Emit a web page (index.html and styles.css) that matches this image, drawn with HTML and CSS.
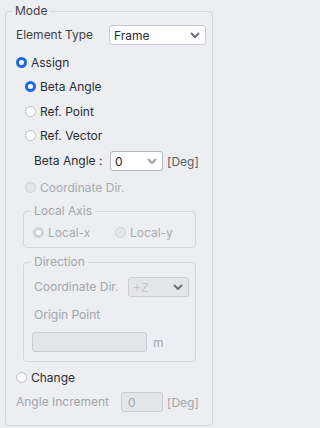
FILE: index.html
```html
<!DOCTYPE html>
<html>
<head>
<meta charset="utf-8">
<link rel="stylesheet" href="styles.css">
</head>
<body>
<div class="page">
  <fieldset class="group outer">
    <legend>Mode</legend>
    <div class="content">
      <div class="row elem-row">
        <span class="label">Element Type</span>
        <div class="select sel-elem"><span class="val">Frame</span><svg class="chev" viewBox="0 0 10 6"><path d="M1 1l4 4 4-4"/></svg></div>
      </div>
      <label class="row radio-row r-assign"><span class="radio checked"></span><span>Assign</span></label>
      <label class="row radio-row sub r-beta"><span class="radio checked"></span><span>Beta Angle</span></label>
      <label class="row radio-row sub r-gap5"><span class="radio"></span><span>Ref. Point</span></label>
      <label class="row radio-row sub r-gap4"><span class="radio"></span><span>Ref. Vector</span></label>
      <div class="row beta-row">
        <span class="label beta-label">Beta Angle :</span>
        <div class="select sel-beta"><span class="val">0</span><svg class="chev light" viewBox="0 0 10 6"><path d="M1 1l4 4 4-4"/></svg></div>
        <span class="unit">[Deg]</span>
      </div>
      <label class="row radio-row sub r-gap6 disabled"><span class="radio dis"></span><span>Coordinate Dir.</span></label>

      <fieldset class="group inner local">
        <legend>Local Axis</legend>
        <div class="inner-content local-content">
          <div class="row local-row">
            <label class="local-opt opt-x disabled"><span class="radio dis-checked"></span><span>Local-x</span></label>
            <label class="local-opt disabled"><span class="radio dis"></span><span>Local-y</span></label>
          </div>
        </div>
      </fieldset>

      <fieldset class="group inner direction">
        <legend>Direction</legend>
        <div class="inner-content dir-content">
          <div class="row dir-row">
            <span class="label muted">Coordinate Dir.</span>
            <div class="select sel-dir disabled-box"><span class="val">+Z</span><svg class="chev dark" viewBox="0 0 10 6"><path d="M1 1l4 4 4-4"/></svg></div>
          </div>
          <div class="row origin-label"><span class="label muted">Origin Point</span></div>
          <div class="row origin-row">
            <div class="input disabled-box origin-input"></div>
            <span class="unit muted m-unit">m</span>
          </div>
        </div>
      </fieldset>

      <label class="row radio-row r-change"><span class="radio"></span><span>Change</span></label>
      <div class="row inc-row">
        <span class="label muted">Angle Increment</span>
        <div class="input disabled-box inc-input"><span class="val">0</span></div>
        <span class="unit muted">[Deg]</span>
      </div>
    </div>
  </fieldset>
</div>
</body>
</html>
```

FILE: styles.css
```css
html, body {
  margin: 0;
  padding: 0;
  background: #eceef1;
}
body {
  font-family: "Inter", "Noto Sans", sans-serif;
  font-size: 12px;
  color: #3f4247;
}
.page {
  padding: 4px 4px 0 5px;
  width: 208px;
}
.group {
  margin: 0;
  padding: 0;
  border: 1px solid #d3d6db;
  border-radius: 4px;
  min-width: 0;
}
.group legend {
  padding: 0 3px;
  margin-left: 6px;
  line-height: 14px;
  height: 14px;
  font-size: 12px;
}
.outer legend {
  color: #3f4247;
}
.content {
  padding: 0 6px 13px 10px;
  display: flex;
  flex-direction: column;
}
.row {
  display: flex;
  align-items: center;
  height: 20px;
  white-space: nowrap;
}
.elem-row {
  margin-top: 7px;
}
.label {
  line-height: 20px;
}
.select, .input {
  box-sizing: border-box;
  height: 20px;
  border: 1px solid #c7cbd1;
  border-radius: 3px;
  background: #fff;
  display: flex;
  align-items: center;
  padding: 0 0 0 4px;
}
.sel-elem {
  margin-left: auto;
  width: 97px;
  color: #2b2d31;
}
.val {
  flex: 1;
}
.chev {
  width: 10px;
  height: 6px;
  margin-right: 5px;
  fill: none;
  stroke: #6d7177;
  stroke-width: 2;
}
.chev.light {
  stroke: #9ea2a8;
}
.chev.dark {
  stroke: #6d7177;
}
.radio-row {
  gap: 4px;
  color: #2b2d31;
}
.radio {
  box-sizing: border-box;
  width: 11px;
  height: 11px;
  border-radius: 50%;
  border: 1px solid #b9bdc3;
  background: #fff;
  flex: none;
}
.radio.checked {
  border: 3px solid #1a6ae6;
  background: #fff;
}
.radio.dis {
  border: 1px solid #cfd2d6;
  background: #e3e5e8;
}
.radio.dis-checked {
  border: 3px solid #d0d3d7;
  background: #fafafa;
}
.sub {
  padding-left: 9px;
}
.r-assign { margin-top: 7px; }
.r-beta { margin-top: 4px; }
.r-gap5 { margin-top: 5px; }
.r-gap4 { margin-top: 4px; }
.r-gap6 { margin-top: 6px; }
.disabled {
  color: #a8abb0;
}
.muted {
  color: #a3a6ab;
}
.beta-row {
  margin-top: 6px;
}
.beta-label {
  padding-left: 18px;
  width: 76px;
  color: #2b2d31;
}
.sel-beta {
  width: 53px;
  border-color: #b3b7bd;
  color: #1e2024;
}
.unit {
  margin-left: 4px;
}
.beta-row .unit {
  color: #5a5e64;
}
.inner {
  margin: 7px 0 0 7px;
  width: 173px;
  box-sizing: border-box;
}
.inner legend {
  margin-left: 7px;
  color: #a3a6ab;
}
.inner-content {
  padding: 0 6px 0 9px;
  display: flex;
  flex-direction: column;
}
.local-content {
  padding-bottom: 5px;
}
.local-row {
  margin-top: 4px;
  gap: 0;
}
.local-opt {
  display: flex;
  align-items: center;
  gap: 4px;
}
.opt-x {
  width: 82px;
}
.dir-content {
  padding-left: 10px;
  padding-bottom: 9px;
}
.dir-row {
  margin-top: 8px;
}
.sel-dir {
  margin-left: auto;
  width: 61px;
  margin-right: 0;
}
.disabled-box {
  background: #e3e5e8;
  border-color: #c9ccd1;
  color: #c2c5ca;
}
.origin-label {
  margin-top: 8px;
}
.origin-row {
  margin-top: 7px;
}
.origin-input {
  width: 115px;
  margin-left: -2px;
}
.m-unit {
  margin-left: 6px;
}
.r-change {
  margin-top: 5px;
}
.inc-row {
  margin-top: 5px;
}
.inc-row .label {
  width: 105px;
}
.inc-input {
  width: 42px;
  padding-left: 6px;
  color: #a3a6ab;
}
```
